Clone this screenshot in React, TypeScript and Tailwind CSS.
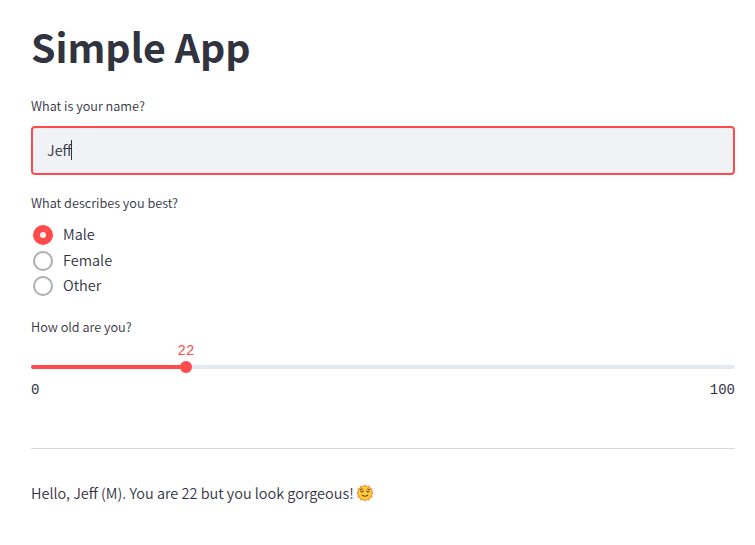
const options = ["Male", "Female", "Other"];

function Label({ children }: { children: string }) {
  return (
    <div className="h-5 text-[12.7px] leading-5 whitespace-nowrap">
      {children}
    </div>
  );
}

function SunIcon() {
  return (
    <svg viewBox="0 0 18 18" className="ml-0.5 h-[18px] w-[18px]">
      <path
        d="M9 .5l1.9 1.5 2.4-.4.9 2.2 2.3 1-.4 2.3L17.5 9l-1.4 1.9.4 2.4-2.3.9-.9 2.2-2.4-.4L9 17.5 7.1 16l-2.4.4-.9-2.2-2.3-.9.4-2.4L.5 9l1.4-1.9-.4-2.3 2.3-1 .9-2.2 2.4.4z"
        fill="#ff8a3c"
      />
      <circle cx="9" cy="9" r="6.7" fill="#fdcb3e" />
      <path
        d="M4.6 5.6l1.8-.6M11.6 5l1.8.6M4.8 7.2q1.2 1.5 2.5 0M10.7 7.2q1.2 1.5 2.5 0M6.3 11.2q2.7 2 5.4 0"
        fill="none"
        stroke="#674522"
        strokeWidth="1.1"
        strokeLinecap="round"
      />
    </svg>
  );
}

export default function App() {
  return (
    <main className="h-[545px] bg-white pt-[19px] pr-5 pl-[31px] font-['Noto_Sans_CJK_SC','Noto_Sans',sans-serif] font-[350] text-[#31333f]">
      <h1 className="h-[56px] text-[39.3px] leading-[53px] font-bold whitespace-nowrap">
        Simple App
      </h1>

      <section className="mt-[21px]">
        <Label>What is your name?</Label>
        <div className="mt-2.5 flex h-[49px] items-center rounded border-2 border-[#ff4b4b] bg-[#f0f2f6] pb-px pl-3.5 text-[14.4px]">
          <span className="-mr-px leading-5">Jeff</span>
          <span className="h-5 w-px bg-[#31333f]" />
        </div>
      </section>

      <section className="mt-[18px]">
        <Label>What describes you best?</Label>
        <div className="mt-[9px] flex flex-col">
          {options.map((option, index) => (
            <div
              key={option}
              className={
                index === 1
                  ? "flex h-[26px] items-center pt-px pl-0.5"
                  : "flex h-[25px] items-center pl-0.5"
              }
            >
              {index === 0 ? (
                <span className="flex h-5 w-5 items-center justify-center rounded-full bg-[#ff4b4b]">
                  <span className="h-1.5 w-1.5 rounded-full bg-[#f0f2f6]" />
                </span>
              ) : (
                <span className="h-5 w-5 rounded-full border-2 border-[#adaeb2] bg-white" />
              )}
              <span className="ml-2.5 h-[21px] text-[14.5px] leading-5">
                {option}
              </span>
            </div>
          ))}
        </div>
      </section>

      <section className="mt-[19px]">
        <Label>How old are you?</Label>
        <div className="mt-1 flex h-5 w-[310px] justify-center font-['Liberation_Mono',monospace] text-[14px] leading-5 text-[#ff4b4b]">
          22
        </div>
        <div className="relative mt-1 h-1 rounded-full bg-[#e4e8f0]">
          <div className="h-1 w-[155px] rounded-full bg-[#ff4b4b]" />
          <div className="absolute -top-1 left-[149px] h-3 w-3 rounded-full bg-[#ff4b4b]" />
        </div>
        <div className="mt-[11px] flex h-5 justify-between font-['Liberation_Mono',monospace] text-[14px] leading-5">
          <span>0</span>
          <span>100</span>
        </div>
      </section>

      <hr className="mt-12 border-[#d6d6d9]" />

      <p className="mt-[34px] flex h-5 items-center text-[14.48px] leading-5 whitespace-nowrap">
        <span>Hello, Jeff (M). You are 22 but you look gorgeous!</span>
        <SunIcon />
      </p>
    </main>
  );
}
